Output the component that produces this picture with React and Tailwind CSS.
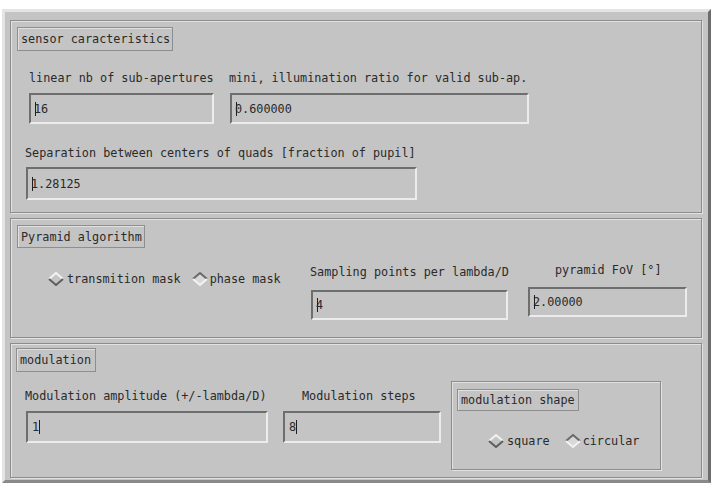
import React from 'react';

const mono = "font-['DejaVu_Sans_Mono','Liberation_Mono',monospace] text-[11.8px] leading-[14px] text-[#2a2a2a] whitespace-nowrap";

// etched frame around each group of settings
function Group({ className = '', children }) {
  return (
    <div className={`border border-[#8c8c8c] shadow-[inset_1px_1px_0_#e2e2e2,1px_1px_0_#e2e2e2] ${className}`}>
      {children}
    </div>
  );
}

function Caption({ className = '', children }) {
  return (
    <div className={`flex items-center border border-[#8e8e8e] pl-[3px] shadow-[inset_1px_1px_0_#e0e0e0] ${mono} ${className}`}>
      {children}
    </div>
  );
}

function Caret() {
  return <span className="inline-block h-[14px] w-px bg-[#1e1e1e]" />;
}

// sunken text entry, caret at the start or after the value
function Entry({ value, caretAfter = false, className = '' }) {
  return (
    <div
      className={`flex items-center border-2 border-t-[#6e6e6e] border-l-[#6e6e6e] border-b-[#ececec] border-r-[#ececec] pl-[4px] ${mono} ${className}`}
    >
      {!caretAfter && <Caret />}
      <span className={caretAfter ? '' : '-ml-[2px]'}>{value}</span>
      {caretAfter && <Caret />}
    </div>
  );
}

function Diamond({ on }) {
  const top = on ? '#6a6a6a' : '#f2f2f2';
  const bottom = on ? '#f2f2f2' : '#5e5e5e';
  return (
    <svg width="16" height="14" viewBox="0 0 16 14" className="shrink-0">
      <polygon points="8,1 15,7 8,13 1,7" fill={on ? '#d8d8d8' : '#c4c4c4'} />
      <polyline points="1,7 8,1 15,7" fill="none" stroke={top} strokeWidth="2" />
      <polyline points="1,7 8,13 15,7" fill="none" stroke={bottom} strokeWidth="2" />
    </svg>
  );
}

function Radio({ on = false, label, gap = 'gap-[3px]' }) {
  return (
    <div className={`flex items-center ${gap}`}>
      <Diamond on={on} />
      <span className={mono}>{label}</span>
    </div>
  );
}

export default function App() {
  return (
    <div className="h-[486px] w-[715px] bg-white pl-[2px] pt-[9px]">
      <div className="h-[474px] w-[709px] border-[3px] border-t-[#e4e4e4] border-l-[#e4e4e4] border-r-[#6c6c6c] border-b-[#8a8a8a] bg-[#c4c4c4] pl-[5px] pt-[8px]">
        <div className="flex w-[692px] flex-col gap-[5px]">
          {/* sensor */}
          <Group className="h-[193px]">
            <Caption className="ml-[6px] mt-[6px] h-[24px] w-[156px]">sensor caracteristics</Caption>
            <div className="mt-[20px] flex">
              <div className="ml-[18px] w-[200px]">
                <div className={mono}>linear nb of sub-apertures</div>
                <Entry value="16" className="mt-[8px] h-[31px] w-[185px]" />
              </div>
              <div>
                <div className={mono}>mini, illumination ratio for valid sub-ap.</div>
                <Entry value="0.600000" className="ml-px mt-[8px] h-[31px] w-[299px]" />
              </div>
            </div>
            <div className={`ml-[14px] mt-[22px] ${mono}`}>Separation between centers of quads [fraction of pupil]</div>
            <Entry value="1.28125" className="ml-[15px] mt-[7px] h-[33px] w-[391px]" />
          </Group>

          {/* pyramid */}
          <Group className="h-[120px]">
            <Caption className="ml-[6px] mt-[6px] h-[23px] w-[128px]">Pyramid algorithm</Caption>
            <div className="mt-[15px] flex items-start">
              <div className="ml-[37px] mt-[9px] flex w-[262px] items-center gap-[11px]">
                <Radio label="transmition mask" />
                <Radio on label="phase mask" gap="gap-[2px]" />
              </div>
              <div className="mt-[2px] w-[218px]">
                <div className={mono}>Sampling points per lambda/D</div>
                <Entry value="4" className="ml-px mt-[11px] h-[30px] w-[197px]" />
              </div>
              <div>
                <div className={`pl-[27px] ${mono}`}>pyramid FoV [°]</div>
                <Entry value="2.00000" className="mt-[10px] h-[30px] w-[159px]" />
              </div>
            </div>
          </Group>

          {/* modulation */}
          <Group className="h-[135px]">
            <Caption className="ml-[5px] mt-[4px] h-[24px] w-[80px]">modulation</Caption>
            <div className="mt-[9px] flex items-start">
              <div className="ml-[14px] w-[258px] pt-[8px]">
                <div className={mono}>Modulation amplitude (+/-lambda/D)</div>
                <Entry value="1" caretAfter className="ml-px mt-[8px] h-[32px] w-[242px]" />
              </div>
              <div className="w-[168px] pt-[8px]">
                <div className={`pl-[19px] ${mono}`}>Modulation steps</div>
                <Entry value="8" caretAfter className="mt-[8px] h-[32px] w-[158px]" />
              </div>
              <Group className="h-[89px] w-[210px]">
                <Caption className="ml-[5px] mt-[7px] h-[22px] w-[122px]">modulation shape</Caption>
                <div className="ml-[36px] mt-[23px] flex items-center gap-[15px]">
                  <Radio label="square" />
                  <Radio on label="circular" gap="gap-[2px]" />
                </div>
              </Group>
            </div>
          </Group>
        </div>
      </div>
    </div>
  );
}
